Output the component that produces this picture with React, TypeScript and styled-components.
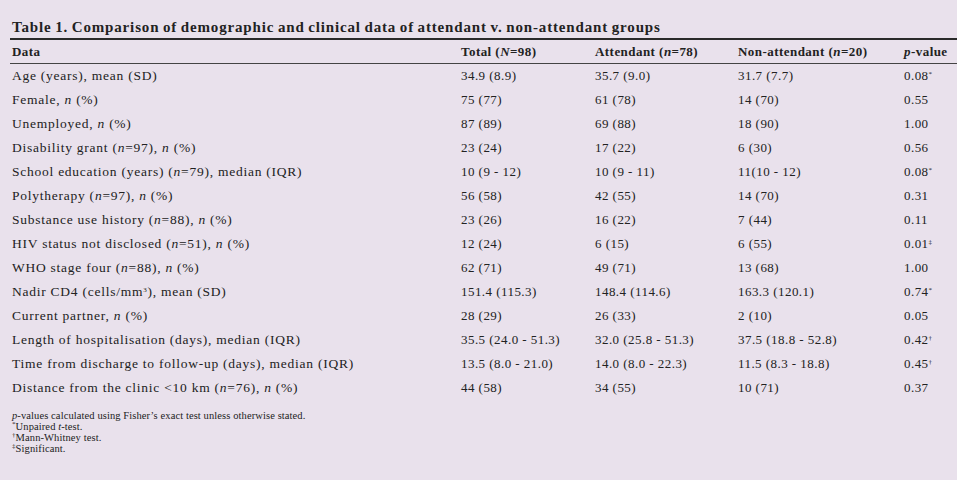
import React from "react";
import styled, { createGlobalStyle } from "styled-components";

const GlobalStyle = createGlobalStyle`
  html, body {
    margin: 0;
    padding: 0;
    background: #e9e1ec;
  }
  body {
    font-family: "Liberation Serif", "DejaVu Serif", serif;
    color: #222;
  }
`;

interface Row {
  label: React.ReactNode;
  total: string;
  attendant: string;
  nonAttendant: string;
  p: string;
  mark?: string;
}

const Page = styled.div`
  width: 957px;
  height: 480px;
  overflow: hidden;
  padding: 17px 0 0 10px;
  box-sizing: border-box;
`;

const Title = styled.div`
  font-weight: bold;
  font-size: 15px;
  letter-spacing: 0.85px;
  word-spacing: -1px;
  line-height: 20px;
  padding-left: 2px;
  border-bottom: 2px solid #2a2a2a;
  padding-bottom: 1px;
`;

const Grid = styled.div`
  display: grid;
  grid-template-columns: 449px 134px 143px 166px 1fr;
`;

const Cell = styled.div<{ $head?: boolean; $last?: boolean; $label?: boolean }>`
  font-size: ${(p) => (p.$label && !p.$head ? "13.5px" : "13px")};
  letter-spacing: ${(p) => (p.$label && !p.$head ? "0.75px" : "0.45px")};
  line-height: 24px;
  height: 24px;
  padding-left: ${(p) => (p.$last ? "2px" : "2px")};
  white-space: nowrap;
  font-weight: ${(p) => (p.$head ? "bold" : "normal")};
  ${(p) => (p.$head ? "border-bottom: 1px solid #444; height: 23px;" : "")}
`;

const Sup = styled.sup`
  font-size: 7px;
  vertical-align: 4px;
  line-height: 0;
`;

const Notes = styled.div`
  padding: 10px 0 0 2px;
  font-size: 10.5px;
  line-height: 11px;
  letter-spacing: 0.1px;
`;

const rows: Row[] = [
  { label: "Age (years), mean (SD)", total: "34.9 (8.9)", attendant: "35.7 (9.0)", nonAttendant: "31.7 (7.7)", p: "0.08", mark: "*" },
  { label: <>Female, <i>n</i> (%)</>, total: "75 (77)", attendant: "61 (78)", nonAttendant: "14 (70)", p: "0.55" },
  { label: <>Unemployed, <i>n</i> (%)</>, total: "87 (89)", attendant: "69 (88)", nonAttendant: "18 (90)", p: "1.00" },
  { label: <>Disability grant (<i>n</i>=97), <i>n</i> (%)</>, total: "23 (24)", attendant: "17 (22)", nonAttendant: "6 (30)", p: "0.56" },
  { label: <>School education (years) (<i>n</i>=79), median (IQR)</>, total: "10 (9 - 12)", attendant: "10 (9 - 11)", nonAttendant: "11(10 - 12)", p: "0.08", mark: "*" },
  { label: <>Polytherapy (<i>n</i>=97), <i>n</i> (%)</>, total: "56 (58)", attendant: "42 (55)", nonAttendant: "14 (70)", p: "0.31" },
  { label: <>Substance use history (<i>n</i>=88), <i>n</i> (%)</>, total: "23 (26)", attendant: "16 (22)", nonAttendant: "7 (44)", p: "0.11" },
  { label: <>HIV status not disclosed (<i>n</i>=51), <i>n</i> (%)</>, total: "12 (24)", attendant: "6 (15)", nonAttendant: "6 (55)", p: "0.01", mark: "‡" },
  { label: <>WHO stage four (<i>n</i>=88), <i>n</i> (%)</>, total: "62 (71)", attendant: "49 (71)", nonAttendant: "13 (68)", p: "1.00" },
  { label: <>Nadir CD4 (cells/mm<Sup>3</Sup>), mean (SD)</>, total: "151.4 (115.3)", attendant: "148.4 (114.6)", nonAttendant: "163.3 (120.1)", p: "0.74", mark: "*" },
  { label: <>Current partner, <i>n</i> (%)</>, total: "28 (29)", attendant: "26 (33)", nonAttendant: "2 (10)", p: "0.05" },
  { label: "Length of hospitalisation (days), median (IQR)", total: "35.5 (24.0 - 51.3)", attendant: "32.0 (25.8 - 51.3)", nonAttendant: "37.5 (18.8 - 52.8)", p: "0.42", mark: "†" },
  { label: "Time from discharge to follow-up (days), median (IQR)", total: "13.5 (8.0 - 21.0)", attendant: "14.0 (8.0 - 22.3)", nonAttendant: "11.5 (8.3 - 18.8)", p: "0.45", mark: "†" },
  { label: <>Distance from the clinic &lt;10 km (<i>n</i>=76), <i>n</i> (%)</>, total: "44 (58)", attendant: "34 (55)", nonAttendant: "10 (71)", p: "0.37" },
];

export default function App() {
  return (
    <>
      <GlobalStyle />
      <Page>
        <Title>Table 1. Comparison of demographic and clinical data of attendant v. non-attendant groups</Title>
        <Grid>
          <Cell $head $label>Data</Cell>
          <Cell $head>Total (<i>N</i>=98)</Cell>
          <Cell $head>Attendant (<i>n</i>=78)</Cell>
          <Cell $head>Non-attendant (<i>n</i>=20)</Cell>
          <Cell $head $last><i>p</i>-value</Cell>
          {rows.map((r, i) => (
            <React.Fragment key={i}>
              <Cell $label>{r.label}</Cell>
              <Cell>{r.total}</Cell>
              <Cell>{r.attendant}</Cell>
              <Cell>{r.nonAttendant}</Cell>
              <Cell $last>
                {r.p}
                {r.mark && <Sup>{r.mark}</Sup>}
              </Cell>
            </React.Fragment>
          ))}
        </Grid>
        <Notes>
          <div><i>p</i>-values calculated using Fisher’s exact test unless otherwise stated.</div>
          <div><Sup>*</Sup>Unpaired <i>t</i>-test.</div>
          <div><Sup>†</Sup>Mann-Whitney test.</div>
          <div><Sup>‡</Sup>Significant.</div>
        </Notes>
      </Page>
    </>
  );
}
